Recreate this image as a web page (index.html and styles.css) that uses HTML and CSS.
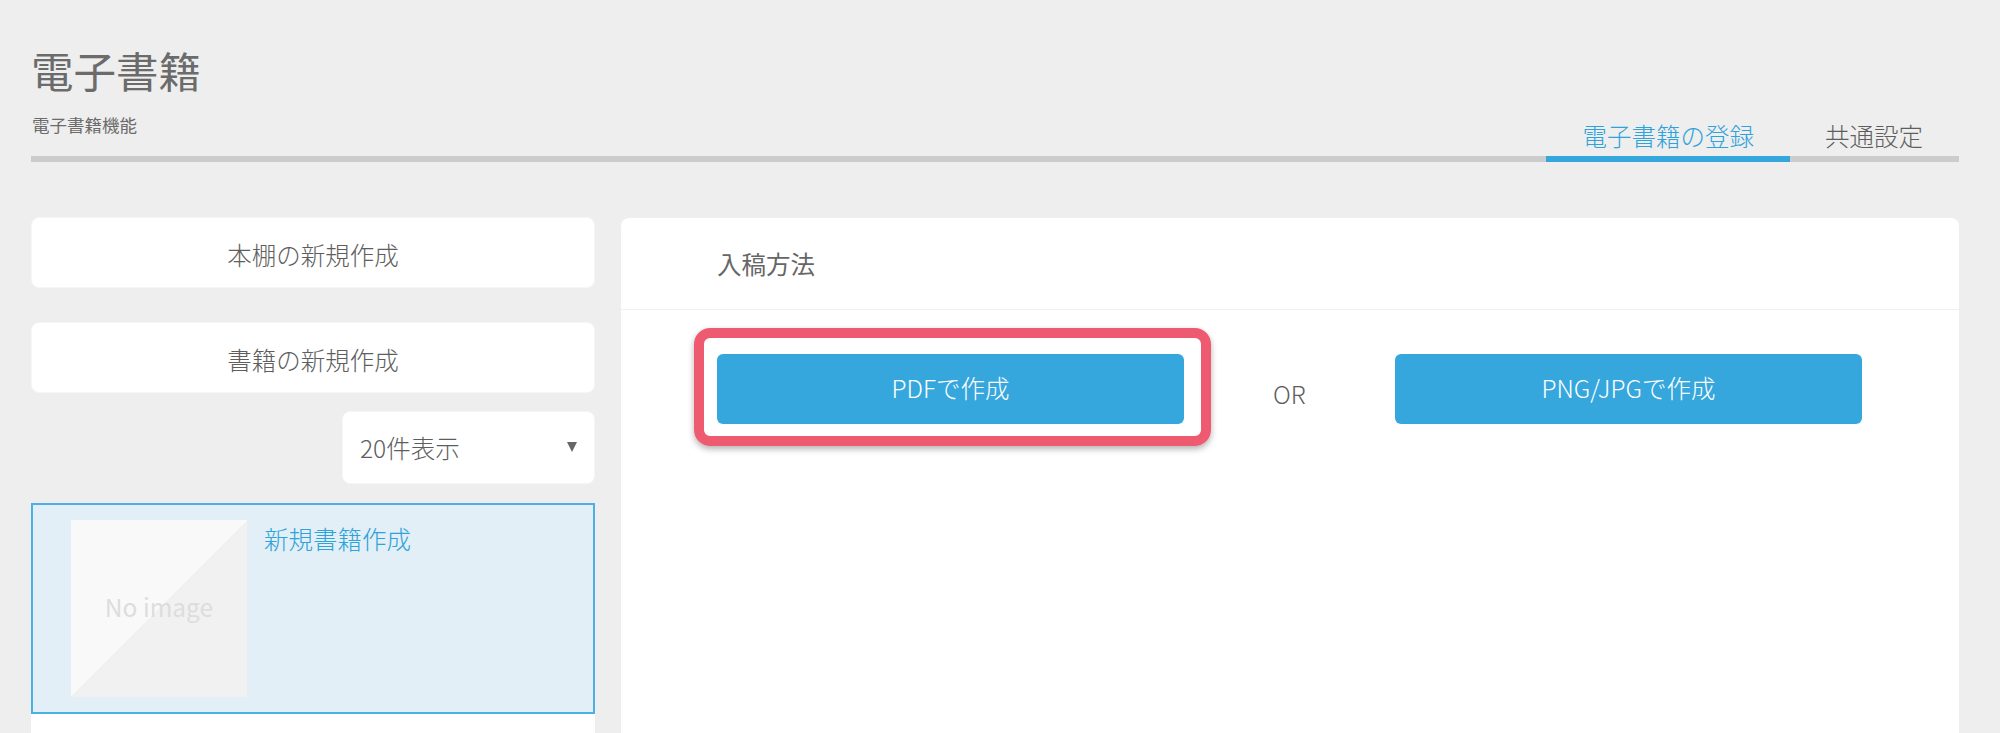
FILE: index.html
```html
<!DOCTYPE html>
<html lang="ja">
<head>
<meta charset="utf-8">
<title>電子書籍</title>
<link rel="stylesheet" href="styles.css">
</head>
<body>
<div class="page">
  <header class="page-head">
    <div class="titles">
      <h1 class="title">電子書籍</h1>
      <p class="subtitle">電子書籍機能</p>
    </div>
    <nav class="tabs">
      <a class="tab tab-active">電子書籍の登録</a>
      <a class="tab tab-plain">共通設定</a>
    </nav>
  </header>
  <div class="columns">
    <aside class="side">
      <div class="side-btn">本棚の新規作成</div>
      <div class="side-btn side-btn-second">書籍の新規作成</div>
      <div class="select-row">
        <div class="select">
          <span>20件表示</span>
          <svg class="select-arrow" viewBox="0 0 10 10" width="10" height="10"><path d="M0 0H10L5 10Z"/></svg>
        </div>
      </div>
      <div class="book-list">
        <div class="book book-active">
          <div class="noimage">No image</div>
          <div class="book-title">新規書籍作成</div>
        </div>
      </div>
    </aside>
    <main class="panel">
      <div class="panel-head">入稿方法</div>
      <div class="panel-body">
        <div class="highlight">
          <a class="btn">PDFで作成</a>
        </div>
        <span class="or">OR</span>
        <a class="btn">PNG/JPGで作成</a>
      </div>
    </main>
  </div>
</div>
</body>
</html>
```
FILE: styles.css
```css
* { box-sizing: border-box; }
html, body { margin: 0; height: 100%; overflow: hidden; }
body {
  background: #eeeeee;
  color: #5e5e5e;
  font-family: "Noto Sans CJK JP", "Noto Sans", sans-serif;
  font-size: 24.5px;
  font-weight: 300;
}
.page { padding: 0 41px 0 31px; height: 100%; display: flex; flex-direction: column; }
.page-head {
  height: 162px;
  display: flex;
  justify-content: space-between;
  align-items: flex-end;
  border-bottom: 6px solid #cccccc;
}
.titles { align-self: flex-start; }
.title { margin: 0; padding-top: 45px; color: #6b6b6b; font-size: 42.5px; font-weight: 400; line-height: 50px; }
.subtitle { margin: 19px 0 0 1px; color: #6b6b6b; font-size: 17.5px; font-weight: 400; line-height: 22px; height: 28px; }
.tabs { display: flex; margin-bottom: -6px; }
.tab { padding: 0 36px; line-height: 40px; height: 46px; border-bottom: 6px solid transparent; }
.tab-plain { padding-left: 35px; }
.tab-active { padding: 0 36px 0 37px; color: #2ea2da; border-bottom-color: #35a7dd; }
.columns { display: flex; gap: 26px; margin-top: 55px; flex: 1; min-height: 0; }
.side { width: 564px; flex: none; display: flex; flex-direction: column; }
.side-btn {
  height: 71px;
  line-height: 73px;
  background: #fff;
  border: 1px solid #f6f6f6;
  border-radius: 8px;
  text-align: center;
}
.side-btn-second { margin-top: 34px; }
.select-row { display: flex; justify-content: flex-end; margin: 18px 0 19px; }
.select {
  width: 253px;
  height: 73px;
  padding: 0 17px 0 17px;
  background: #fff;
  border: 1px solid #f6f6f6;
  border-radius: 8px;
  display: flex;
  justify-content: space-between;
  align-items: center;
}
.select-arrow { fill: #666666; margin-bottom: 1px; }
.book-list { flex: 1; background: #fff; }
.book {
  height: 211px;
  padding: 15px 0 0 38px;
  display: flex;
  gap: 17px;
  align-items: flex-start;
}
.book-active { background: #e2eff6; border: 2px solid #4db0e3; }
.noimage {
  width: 176px;
  height: 177px;
  padding-bottom: 4px;
  background: linear-gradient(to bottom right, #f9f9f9 50%, #f1f1f1 50%);
  color: #dddddd;
  display: flex;
  align-items: center;
  justify-content: center;
  font-size: 24.5px;
  font-weight: 400;
}
.book-title { color: #2ea2da; line-height: 36px; margin-top: 1px; }
.panel { flex: 1; margin-top: 1px; background: #fff; border-radius: 8px 8px 0 0; }
.panel-head {
  height: 92px;
  padding: 0 0 0 96px;
  line-height: 91px;
  color: #666666;
  font-weight: 400;
  border-bottom: 1px solid #f0f0f0;
}
.panel-body { display: flex; align-items: flex-start; padding: 18px 0 0 73px; }
.highlight {
  width: 517px;
  height: 118px;
  padding: 16px 0 0 13px;
  border: 10px solid #ee5b70;
  border-radius: 16px;
  box-shadow: 0 3px 6px rgba(0, 0, 0, 0.3);
}
.btn {
  display: block;
  width: 467px;
  height: 70px;
  line-height: 68px;
  background: #35a7dd;
  color: #fff;
  border-radius: 6px;
  font-weight: 300;
  text-align: center;
}
.or { width: 184px; padding: 48px 0 0 62px; line-height: 36px; }
.panel-body > .btn { margin-top: 26px; }
```
